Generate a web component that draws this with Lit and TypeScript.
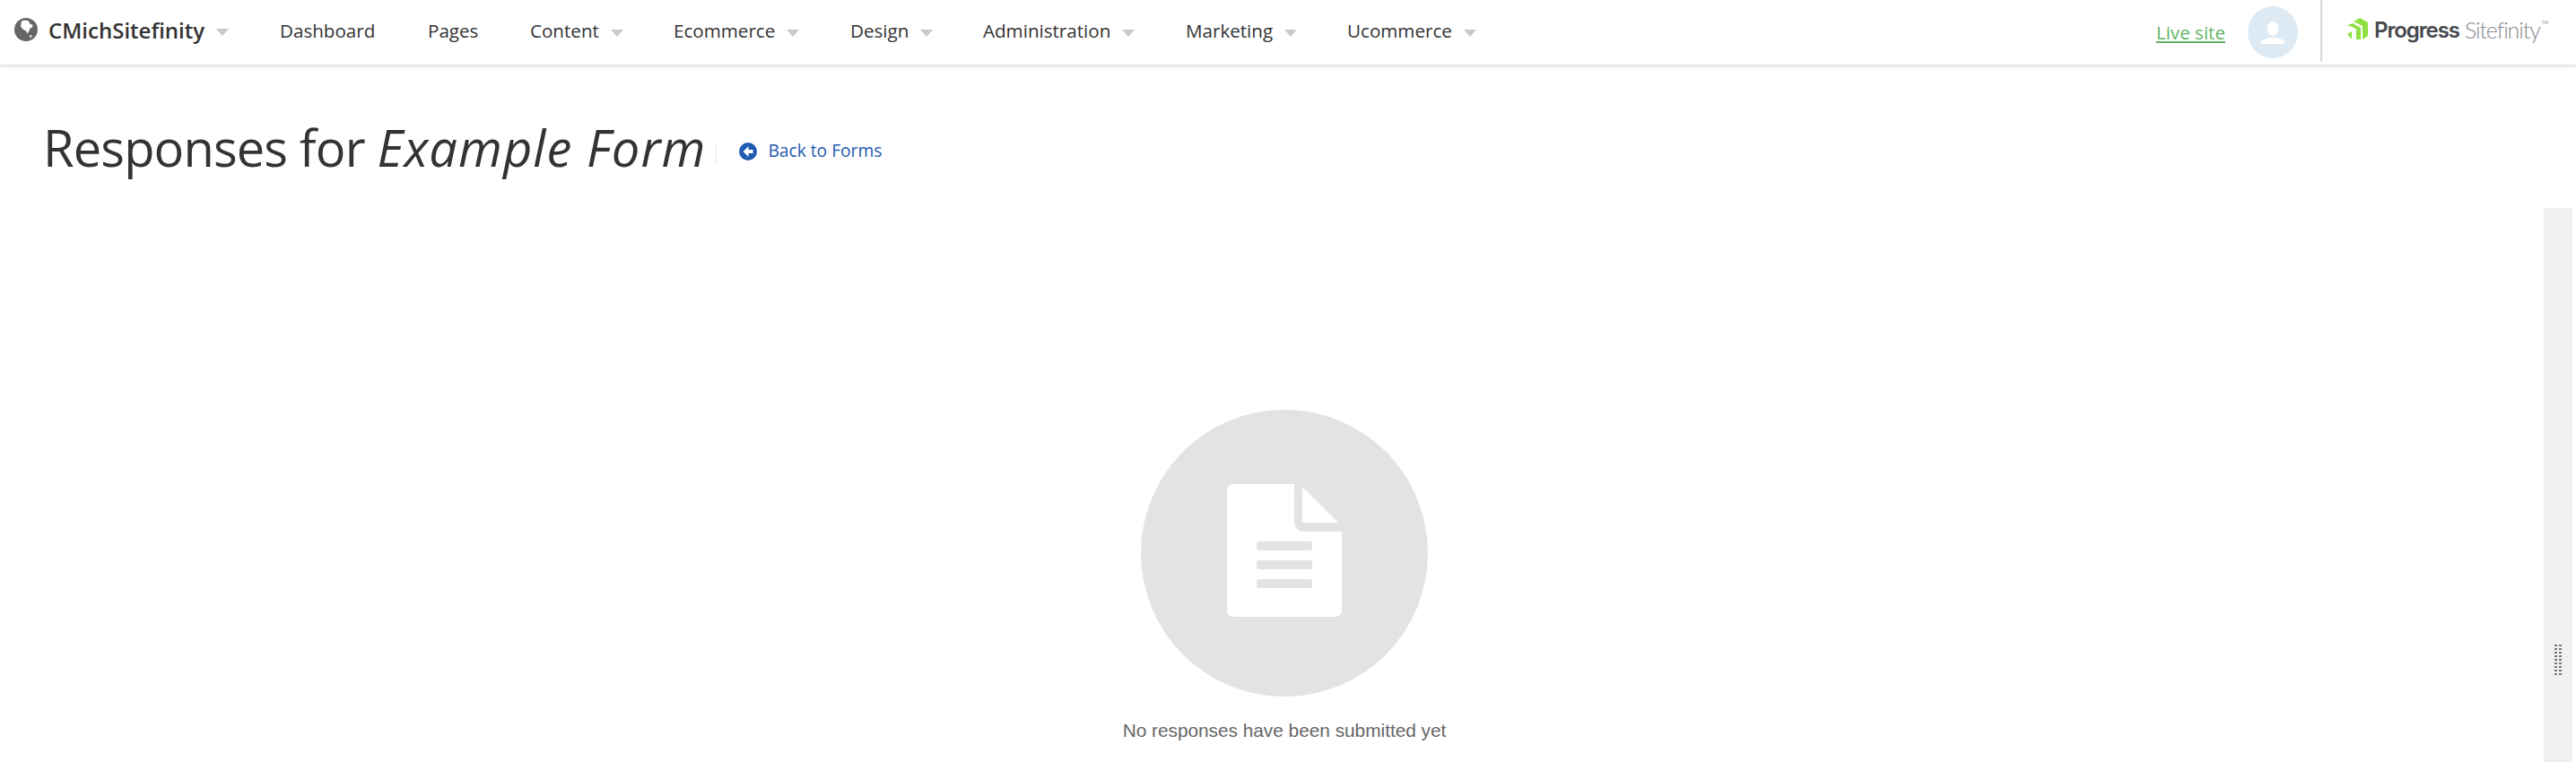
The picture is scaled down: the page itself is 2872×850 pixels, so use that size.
import { LitElement, css, html, nothing } from "lit";
import { customElement } from "lit/decorators.js";

const NAV = [
  { label: "Dashboard", caret: false, width: 165 },
  { label: "Pages", caret: false, width: 114 },
  { label: "Content", caret: true, width: 160 },
  { label: "Ecommerce", caret: true, width: 197 },
  { label: "Design", caret: true, width: 148 },
  { label: "Administration", caret: true, width: 226 },
  { label: "Marketing", caret: true, width: 180 },
  { label: "Ucommerce", caret: true, width: 0 },
];

@customElement("app-root")
export class AppRoot extends LitElement {
  static styles = css`
    :host {
      display: block;
      position: relative;
      height: 850px;
      overflow: hidden;
      background: #fff;
      font-family: "Open Sans", sans-serif;
      color: #333;
    }

    header {
      display: flex;
      align-items: center;
      height: 73px;
      border-bottom: 1px solid #e4e4e4;
      box-shadow: 0 1px 4px rgba(0, 0, 0, 0.14);
      box-sizing: border-box;
      padding-left: 16px;
    }

    .brand {
      display: flex;
      align-items: center;
      width: 296px;
      padding-bottom: 6px;
      box-sizing: border-box;
      font-size: 24px;
      font-weight: 600;
      color: #333;
    }

    .globe {
      width: 26px;
      height: 26px;
      margin-right: 12px;
    }

    .caret {
      display: inline-block;
      width: 0;
      height: 0;
      margin-left: 13px;
      margin-top: 5px;
      border-left: 7px solid transparent;
      border-right: 7px solid transparent;
      border-top: 8px solid #c9c9c9;
    }

    nav {
      display: flex;
      flex: 1;
      padding-bottom: 4px;
      font-size: 20.6px;
      color: #333;
    }

    .item {
      display: flex;
      align-items: center;
    }

    .right {
      display: flex;
      align-items: center;
      height: 72px;
    }

    .live {
      font-size: 20.6px;
      color: #62b466;
      text-decoration: underline;
      margin-right: 25px;
    }

    .avatar {
      width: 56px;
      height: 58px;
      border-radius: 50%;
      background: #deeaf3;
      display: flex;
      align-items: center;
      justify-content: center;
      margin-right: 25px;
    }

    .divider {
      width: 2px;
      height: 69px;
      background: #d9d9d9;
      align-self: flex-start;
      margin-right: 28px;
    }

    .logo {
      display: flex;
      align-items: center;
      width: 255px;
      height: 60px;
      padding-bottom: 6px;
      box-sizing: border-box;
    }

    .logo svg {
      margin-right: 7px;
      margin-top: -3px;
    }

    .progress {
      font-family: "Inter", sans-serif;
      font-size: 24px;
      font-weight: 600;
      letter-spacing: -1.1px;
      color: #45484d;
    }

    .sitefinity {
      font-family: "Lato", sans-serif;
      font-size: 25px;
      font-weight: 300;
      color: #868a90;
      margin-left: 6px;
      letter-spacing: -1.1px;
    }

    .tm {
      font-size: 5px;
      color: #8f9399;
      margin-bottom: 16px;
      margin-left: 2px;
    }

    .title-row {
      display: flex;
      align-items: center;
      padding: 53px 0 0 48px;
      height: 76px;
    }

    h1 {
      margin: 0;
      font-size: 56px;
      font-weight: 400;
      line-height: 76px;
      letter-spacing: -0.85px;
      color: #333;
    }

    h1 em {
      font-style: italic;
      letter-spacing: 1.05px;
    }

    .sep {
      width: 1px;
      height: 22px;
      background: #e8e8e8;
      margin: 14px 25px 0 11px;
    }

    .back {
      display: flex;
      align-items: center;
      gap: 12px;
      font-size: 19.2px;
      color: #1f5bb0;
      margin-top: 6px;
    }

    .back svg {
      margin-top: 4px;
    }

    .empty {
      display: flex;
      flex-direction: column;
      align-items: center;
      width: 2864px;
      padding-top: 255px;
    }

    .circle {
      width: 320px;
      height: 320px;
      border-radius: 50%;
      background: #e3e3e3;
      display: flex;
      align-items: center;
      justify-content: center;
    }

    .circle svg {
      margin-bottom: 6px;
    }

    .empty p {
      margin: 24px 0 0;
      font-family: "Liberation Sans", sans-serif;
      font-size: 20.8px;
      line-height: 28px;
      color: #666;
    }

    .scroll {
      position: absolute;
      left: 2836px;
      top: 232px;
      bottom: 0;
      width: 32px;
      background: #f0f0f0;
      display: flex;
      justify-content: center;
    }

    .grip {
      width: 10px;
      height: 36px;
      margin-top: 486px;
      background-image: radial-gradient(#777 1.2px, transparent 1.5px);
      background-size: 5px 4px;
    }
  `;

  render() {
    return html`
      <header>
        <div class="brand">
          <svg class="globe" viewBox="0 0 26 26">
            <circle cx="13" cy="13" r="13" fill="#666"></circle>
            <path
              fill="#fff"
              d="M8 3.500c3-1.300 7-1 8.500.5l1 3 3 .5-.5 3-2.500 1-1 3-2 3-1.500-3-3-1.500-3-3.500z M17 19l3 1-2.500 2.500z"
            ></path>
          </svg>
          CMichSitefinity<span class="caret"></span>
        </div>
        <nav>
          ${NAV.map(
            (n) => html`
              <div class="item" style=${n.width ? `width:${n.width}px` : ""}>
                ${n.label}${n.caret ? html`<span class="caret"></span>` : nothing}
              </div>
            `
          )}
        </nav>
        <div class="right">
          <span class="live">Live site</span>
          <div class="avatar">
            <svg width="26" height="25" viewBox="0 0 26 25" fill="#fff">
              <ellipse cx="13" cy="8" rx="6.500" ry="8"></ellipse>
              <path d="M0 21l9-3h8l9 3v4H0z"></path>
            </svg>
          </div>
          <div class="divider"></div>
          <div class="logo">
            <svg width="23" height="24" viewBox="0 0 23 24" fill="#8fe043">
              <path d="M7 4l7-4 9 5v15l-6 4V9z"></path>
              <path d="M0 8l6-2 9 5v13h-5V12z"></path>
              <path d="M0 18l5-3v9z"></path>
            </svg>
            <span class="progress">Progress</span>
            <span class="sitefinity">Sitefinity</span>
            <span class="tm">TM</span>
          </div>
        </div>
      </header>

      <div class="title-row">
        <h1>Responses for <em>Example Form</em></h1>
        <div class="sep"></div>
        <div class="back">
          <svg width="20" height="20" viewBox="0 0 20 20">
            <circle cx="10" cy="10" r="10" fill="#1f5bb0"></circle>
            <path d="M10.500 4L4.500 10l6 6v-4h5V8h-5z" fill="#fff"></path>
          </svg>
          Back to Forms
        </div>
      </div>

      <div class="empty">
        <div class="circle">
          <svg width="128" height="148" viewBox="0 0 128 148" fill="#fff">
            <path
              d="M7 0h68v43a10 10 0 0 0 10 10h43v88a7 7 0 0 1-7 7H7a7 7 0 0 1-7-7V7a7 7 0 0 1 7-7z"
            ></path>
            <path d="M84 3l40 40H84z"></path>
            <g fill="#e3e3e3">
              <rect x="33" y="64" width="62" height="10" rx="3"></rect>
              <rect x="33" y="85" width="62" height="10" rx="3"></rect>
              <rect x="33" y="106" width="62" height="10" rx="3"></rect>
            </g>
          </svg>
        </div>
        <p>No responses have been submitted yet</p>
      </div>

      <div class="scroll"><div class="grip"></div></div>
    `;
  }
}
